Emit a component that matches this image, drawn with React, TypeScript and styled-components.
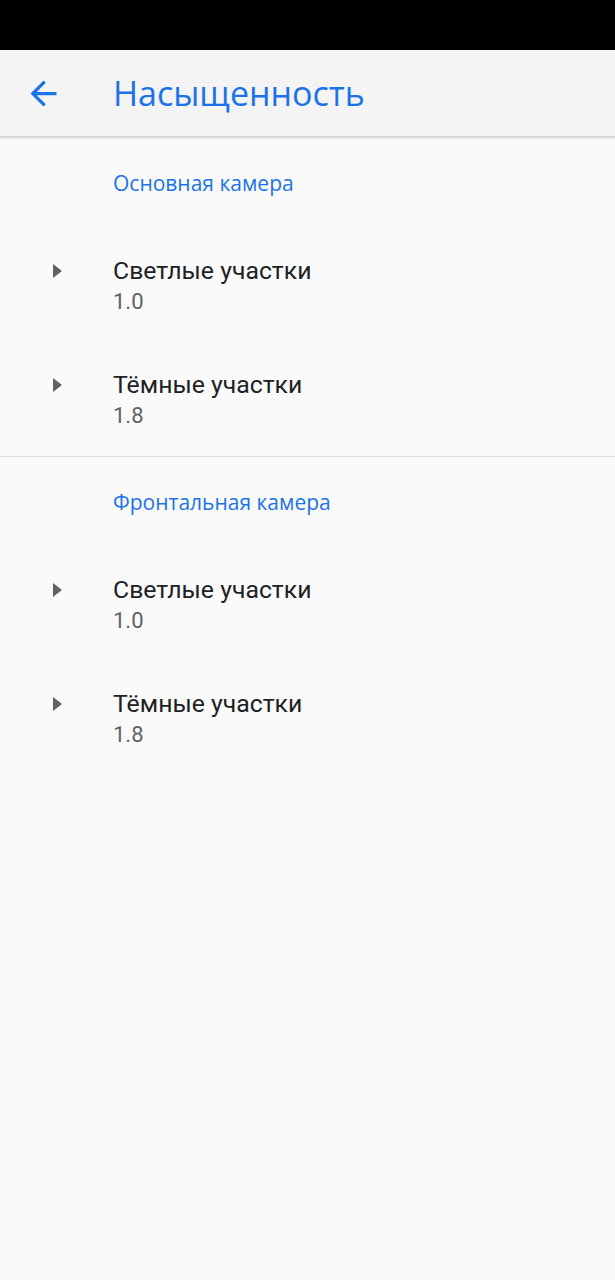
import React from "react";
import styled, { createGlobalStyle } from "styled-components";

const Global = createGlobalStyle`
  html, body { margin: 0; padding: 0; background: #fafafa; }
  body { font-family: Roboto, "Noto Sans", sans-serif; }
`;

const Screen = styled.div`
  width: 615px;
  min-height: 1280px;
  background: #fafafa;
  display: flex;
  flex-direction: column;
`;

const StatusBar = styled.div`
  height: 50px;
  background: #000;
`;

const Toolbar = styled.header`
  height: 86px;
  background: #f4f4f4;
  border-bottom: 2px solid #d6d6d6;
  box-shadow: 0 1px 2px rgba(0, 0, 0, 0.06);
  display: flex;
  align-items: center;
`;

const BackButton = styled.button`
  width: 88px;
  height: 86px;
  padding: 0 0 0 24px;
  border: none;
  background: transparent;
  display: flex;
  align-items: center;
  color: #1a73e8;
  cursor: pointer;
`;

const Title = styled.h1`
  margin: 0 0 0 25px;
  font-family: "Open Sans", Roboto, sans-serif;
  font-weight: 500;
  font-size: 34px;
  color: #1a73e8;
`;

const Section = styled.section<{ $divider?: boolean }>`
  display: flex;
  flex-direction: column;
  border-bottom: ${(p) => (p.$divider ? "1.5px solid #dcdcdc" : "none")};
`;

const Category = styled.div`
  height: 90px;
  box-sizing: border-box;
  padding: 31px 0 0 113px;
  line-height: 28px;
  font-family: "Open Sans", Roboto, sans-serif;
  font-weight: 500;
  font-size: 21px;
  color: #1a73e8;
`;

const Row = styled.div`
  height: 114px;
  box-sizing: border-box;
  padding-top: 28px;
  display: flex;
  align-items: flex-start;
`;

const IconSlot = styled.div`
  width: 113px;
  height: 30px;
  padding-left: 53px;
  box-sizing: border-box;
  display: flex;
  align-items: center;
`;

const Texts = styled.div`
  display: flex;
  flex-direction: column;
`;

const ItemTitle = styled.div`
  font-size: 24.8px;
  line-height: 30px;
  color: #202124;
`;

const Summary = styled.div`
  font-size: 22px;
  line-height: 32px;
  color: #5f6368;
`;

const BackArrow = () => (
  <svg width="39" height="39" viewBox="0 0 24 24" fill="currentColor">
    <path d="M20 11H7.83l5.59-5.59L12 4l-8 8 8 8 1.41-1.41L7.83 13H20v-2z" />
  </svg>
);

const Caret = () => (
  <svg width="9" height="14" viewBox="0 0 9 14">
    <polygon points="0,0 9,7 0,14" fill="#5f6368" />
  </svg>
);

const Item = ({ title, value }: { title: string; value: string }) => (
  <Row>
    <IconSlot>
      <Caret />
    </IconSlot>
    <Texts>
      <ItemTitle>{title}</ItemTitle>
      <Summary>{value}</Summary>
    </Texts>
  </Row>
);

export default function App() {
  return (
    <Screen>
      <Global />
      <StatusBar />
      <Toolbar>
        <BackButton aria-label="Назад">
          <BackArrow />
        </BackButton>
        <Title>Насыщенность</Title>
      </Toolbar>
      <Section $divider>
        <Category>Основная камера</Category>
        <Item title="Светлые участки" value="1.0" />
        <Item title="Тёмные участки" value="1.8" />
      </Section>
      <Section>
        <Category>Фронтальная камера</Category>
        <Item title="Светлые участки" value="1.0" />
        <Item title="Тёмные участки" value="1.8" />
      </Section>
    </Screen>
  );
}
